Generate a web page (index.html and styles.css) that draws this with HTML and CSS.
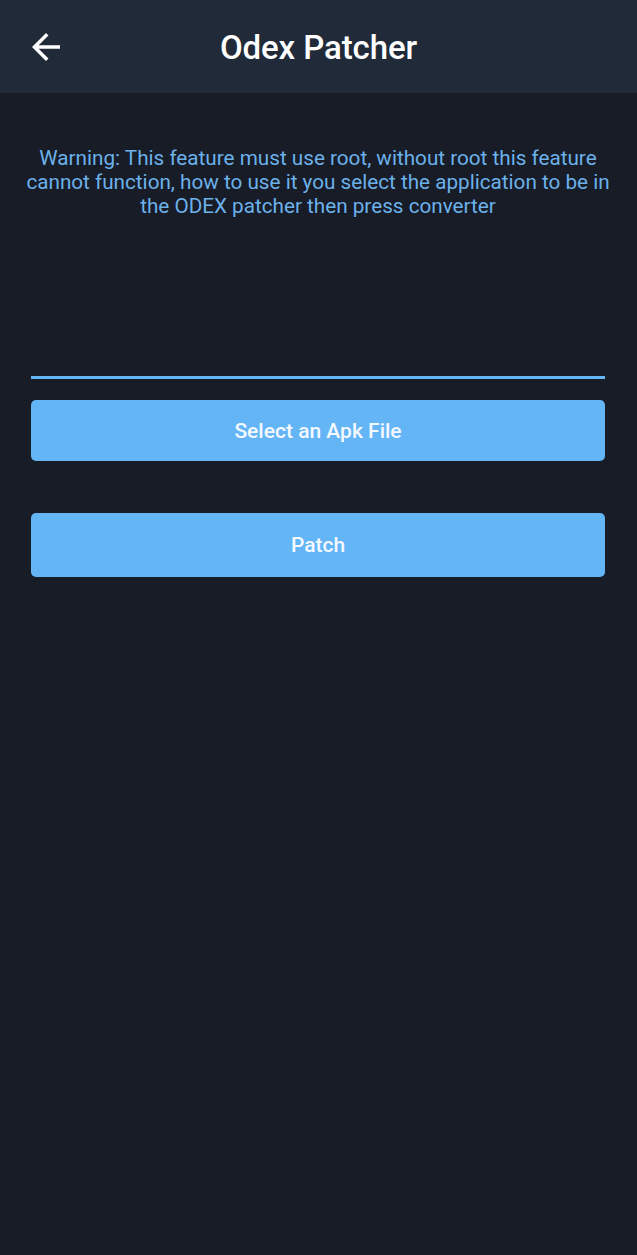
FILE: index.html
```html
<!DOCTYPE html>
<html>
<head>
<meta charset="utf-8">
<link rel="stylesheet" href="styles.css">
</head>
<body>
<div class="app">
  <header class="toolbar">
    <button class="back" aria-label="Back">
      <svg width="42" height="42" viewBox="0 0 24 24"><path fill="#ffffff" d="M20 11H7.83l5.59-5.59L12 4l-8 8 8 8 1.41-1.41L7.83 13H20v-2z"/></svg>
    </button>
    <h1 class="title">Odex Patcher</h1>
  </header>
  <main class="content">
    <p class="warning">Warning: This feature must use root, without root this feature cannot function, how to use it you select the application to be in the ODEX patcher then press converter</p>
    <div class="field"></div>
    <button class="btn btn-select">Select an Apk File</button>
    <button class="btn btn-patch">Patch</button>
  </main>
</div>
</body>
</html>
```
FILE: styles.css
```css
* { box-sizing: border-box; }
html, body { margin: 0; padding: 0; }
body {
  background: #171c26;
  font-family: Roboto, "Noto Sans", sans-serif;
  width: 637px;
  height: 1255px;
  overflow: hidden;
}
.app { display: flex; flex-direction: column; height: 100%; }
.toolbar {
  height: 93px;
  background: #212a39;
  display: flex;
  align-items: center;
  justify-content: center;
  position: relative;
}
.back {
  position: absolute;
  left: 25px;
  top: 26px;
  background: none;
  border: 0;
  padding: 0;
  width: 42px;
  height: 42px;
  display: flex;
}
.title {
  margin: 0;
  color: #ffffff;
  font-weight: 500;
  font-size: 33px;
  letter-spacing: -0.1px;
  line-height: 1;
  padding-top: 2px;
}
.content {
  padding: 53px 32px 0 31px;
  display: flex;
  flex-direction: column;
}
.warning {
  margin: 0 -12px;
  color: #6cb1ea;
  font-size: 20.7px;
  line-height: 24px;
  text-align: center;
}
.field {
  margin-top: 158px;
  height: 3px;
  background: #64b5f6;
}
.btn {
  border: 0;
  border-radius: 5px;
  background: #64b5f6;
  color: #f4f9ff;
  font-family: Roboto, "Noto Sans", sans-serif;
  font-weight: 500;
  font-size: 21px;
  width: 100%;
}
.btn-select { margin-top: 21px; height: 61px; }
.btn-patch { margin-top: 52px; height: 64px; }
```
